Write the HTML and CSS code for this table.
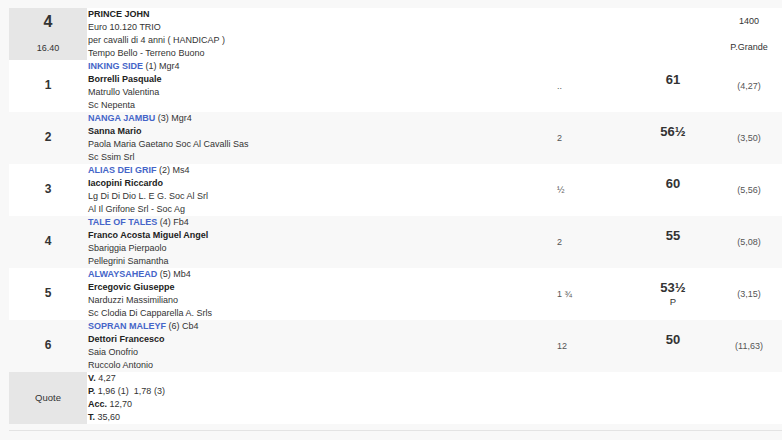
FILE: index.html
```html
<!DOCTYPE html>
<html lang="it">
<head>
<meta charset="utf-8">
<title>Corsa</title>
<link rel="stylesheet" href="styles.css">
</head>
<body>
<div class="wrap">
<table class="race">
  <colgroup>
    <col class="c-num"><col class="c-info"><col class="c-dist"><col class="c-wt"><col class="c-odds">
  </colgroup>
  <tr class="row odd head">
    <td class="num shade"><div class="stack"><span class="big">4</span><span>16.40</span></div></td>
    <td class="info">
      <div class="b">PRINCE JOHN</div>
      <div>Euro 10.120 TRIO</div>
      <div>per cavalli di 4 anni ( HANDICAP )</div>
      <div>Tempo Bello - Terreno Buono</div>
    </td>
    <td></td>
    <td></td>
    <td class="odds"><div class="stack"><span>1400</span><span>P.Grande</span></div></td>
  </tr>
  <tr class="row odd">
    <td class="num"><span class="pos">1</span></td>
    <td class="info">
      <div><span class="horse">INKING SIDE</span> (1) Mgr4</div>
      <div class="b">Borrelli Pasquale</div>
      <div>Matrullo Valentina</div>
      <div>Sc Nepenta</div>
    </td>
    <td class="dist">..</td>
    <td class="wt"><div class="w">61</div><div class="p">&nbsp;</div></td>
    <td class="odds">(4,27)</td>
  </tr>
  <tr class="row even">
    <td class="num"><span class="pos">2</span></td>
    <td class="info">
      <div><span class="horse">NANGA JAMBU</span> (3) Mgr4</div>
      <div class="b">Sanna Mario</div>
      <div>Paola Maria Gaetano Soc Al Cavalli Sas</div>
      <div>Sc Ssim Srl</div>
    </td>
    <td class="dist">2</td>
    <td class="wt"><div class="w">56½</div><div class="p">&nbsp;</div></td>
    <td class="odds">(3,50)</td>
  </tr>
  <tr class="row odd">
    <td class="num"><span class="pos">3</span></td>
    <td class="info">
      <div><span class="horse">ALIAS DEI GRIF</span> (2) Ms4</div>
      <div class="b">Iacopini Riccardo</div>
      <div>Lg Di Di Dio L. E G. Soc Al Srl</div>
      <div>Al Il Grifone Srl - Soc Ag</div>
    </td>
    <td class="dist">½</td>
    <td class="wt"><div class="w">60</div><div class="p">&nbsp;</div></td>
    <td class="odds">(5,56)</td>
  </tr>
  <tr class="row even">
    <td class="num"><span class="pos">4</span></td>
    <td class="info">
      <div><span class="horse">TALE OF TALES</span> (4) Fb4</div>
      <div class="b">Franco Acosta Miguel Angel</div>
      <div>Sbariggia Pierpaolo</div>
      <div>Pellegrini Samantha</div>
    </td>
    <td class="dist">2</td>
    <td class="wt"><div class="w">55</div><div class="p">&nbsp;</div></td>
    <td class="odds">(5,08)</td>
  </tr>
  <tr class="row odd">
    <td class="num"><span class="pos">5</span></td>
    <td class="info">
      <div><span class="horse">ALWAYSAHEAD</span> (5) Mb4</div>
      <div class="b">Ercegovic Giuseppe</div>
      <div>Narduzzi Massimiliano</div>
      <div>Sc Clodia Di Capparella A. Srls</div>
    </td>
    <td class="dist">1 ¾</td>
    <td class="wt"><div class="w">53½</div><div class="p">P</div></td>
    <td class="odds">(3,15)</td>
  </tr>
  <tr class="row even">
    <td class="num"><span class="pos">6</span></td>
    <td class="info">
      <div><span class="horse">SOPRAN MALEYF</span> (6) Cb4</div>
      <div class="b">Dettori Francesco</div>
      <div>Saia Onofrio</div>
      <div>Ruccolo Antonio</div>
    </td>
    <td class="dist">12</td>
    <td class="wt"><div class="w">50</div><div class="p">&nbsp;</div></td>
    <td class="odds">(11,63)</td>
  </tr>
  <tr class="row odd">
    <td class="num shade"><span class="quote">Quote</span></td>
    <td class="info">
      <div><span class="b">V.</span> 4,27</div>
      <div><span class="b">P.</span> 1,96 (1)&nbsp; 1,78 (3)</div>
      <div><span class="b">Acc.</span> 12,70</div>
      <div><span class="b">T.</span> 35,60</div>
    </td>
    <td></td>
    <td></td>
    <td></td>
  </tr>
</table>
</div>
</body>
</html>
```
FILE: styles.css
```css
html, body {
  margin: 0;
  padding: 0;
  background: #f8f8f8;
  overflow: hidden;
}
body {
  font-family: "Liberation Sans", Arial, sans-serif;
  font-size: 9px;
  color: #333;
}
.wrap {
  margin: 8px 0 0 9px;
  padding-bottom: 6px;
  width: 773px;
  border-bottom: 1px solid #e3e3e3;
}
.race {
  border-collapse: collapse;
  table-layout: fixed;
  width: 773px;
}
.c-num { width: 78px; }
.c-info { width: 469px; }
.c-dist { width: 74px; }
.c-wt { width: 86px; }
.c-odds { width: 66px; }

.row td {
  height: 52px;
  padding: 0;
  line-height: 13px;
  vertical-align: middle;
}
.row.odd { background: #ffffff; }
.row.even { background: #f8f8f8; }

.num {
  text-align: center;
  color: #333;
}
.shade { background: #e6e6e6; }
.stack {
  display: flex;
  flex-direction: column;
  justify-content: space-around;
  align-items: center;
  height: 52px;
}
.big {
  font-size: 16px;
  font-weight: bold;
  line-height: 18px;
  color: #333;
}
.pos {
  font-size: 12px;
  font-weight: bold;
  color: #333;
}
.quote {
  font-size: 9.5px;
  color: #333;
}
.info {
  padding-left: 1px !important;
  white-space: nowrap;
}
.b {
  font-weight: bold;
  color: #222;
}
.horse {
  font-weight: bold;
  color: #4565c8;
}
.dist {
  padding-left: 1px !important;
  color: #555;
}
.wt {
  text-align: center;
  color: #333;
}
.w {
  font-size: 13px;
  font-weight: bold;
  line-height: 15px;
}
.p {
  font-size: 9.5px;
  line-height: 13px;
}
.odds {
  text-align: center;
  color: #555;
}
.head .odds { color: #333; }
```
